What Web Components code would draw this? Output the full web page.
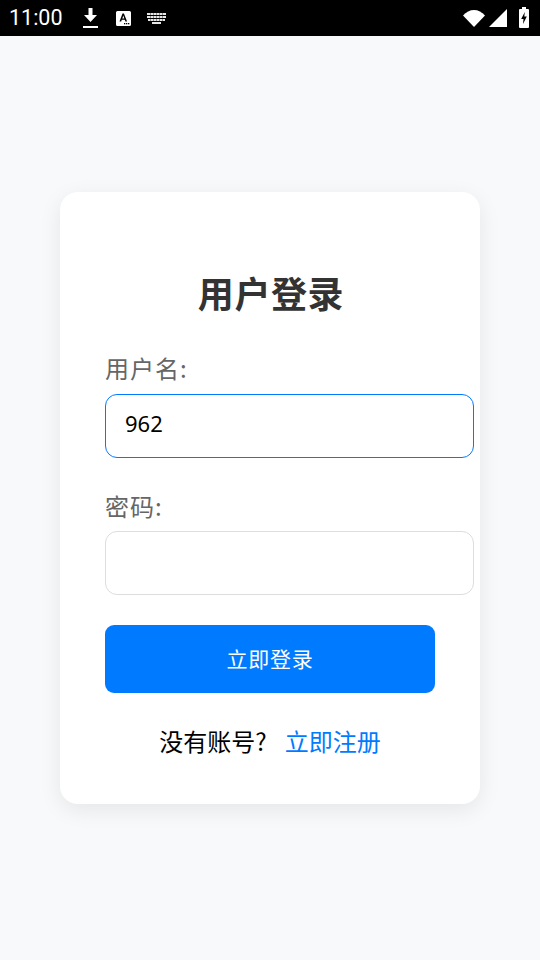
<!DOCTYPE html>
<html lang="zh">
<head>
<meta charset="utf-8">
<title>用户登录</title>
<style>
  html, body { margin: 0; height: 100%; }
  body {
    display: flex;
    flex-direction: column;
    height: 960px;
    overflow: hidden;
    background: #f8f9fa;
    font-family: "Noto Sans CJK SC", "Noto Sans", sans-serif;
  }
</style>
</head>
<body>
<status-bar time="11:00"></status-bar>
<login-page>
  <login-card>
    <span slot="title">用户登录</span>
    <text-field label="用户名:" value="962" focused></text-field>
    <text-field label="密码:"></text-field>
    <span slot="action">立即登录</span>
    <span slot="hint">没有账号?</span>
    <span slot="link">立即注册</span>
  </login-card>
</login-page>

<script>
class StatusBar extends HTMLElement {
  constructor() {
    super();
    this.attachShadow({ mode: "open" });
  }

  connectedCallback() {
    this.shadowRoot.innerHTML = /* html */ `
    <style>
      :host {
        display: flex;
        flex: none;
        align-items: center;
        height: 36px;
        padding: 0 11px 0 9px;
        background: #000;
        color: #fff;
        font: 400 21.5px/36px Roboto, sans-serif;
      }
      svg { display: block; flex: none; fill: #fff; }
      .time { width: 74px; }
      .download { margin-top: 1px; }
      .ime { margin-left: 18px; }
      .keys { margin-left: 16px; }
      .wifi { margin-left: auto; }
      .signal { margin-left: 4px; }
      .battery { margin-left: 12px; margin-top: -2px; }
    </style>
    <span class="time">${this.getAttribute("time")}</span>
    <svg class="download" width="15" height="21" viewBox="0 0 15 21">
      <path d="M5.500 0h4v7H14L7.500 14 1 7h4.500z"/><rect x="0" y="18" width="15" height="2"/>
    </svg>
    <svg class="ime" width="15" height="15" viewBox="0 0 15 15">
      <path fill-rule="evenodd" d="M1.500 0h12A1.500 1.500 0 0 1 15 1.500v12a1.500 1.500 0 0 1-1.500 1.500h-12A1.500 1.500 0 0 1 0 13.500v-12A1.500 1.500 0 0 1 1.500 0zM6.500 2.500 3.500 10.500h1.700l.6-1.700h3l.6 1.700h1.700L7.900 2.500zM6.300 7.400l1-3 1 3z"/>
      <rect x="8" y="12" width="1.300" height="1.300" fill="#000"/><rect x="10" y="12" width="1.300" height="1.300" fill="#000"/><rect x="12" y="12" width="1.300" height="1.300" fill="#000"/>
    </svg>
    <svg class="keys" width="19" height="11" viewBox="0 0 19 11">
      <path d="M0 0h19v2H0zM0 3h19v2H0zM1 6h17v2H1zM5 9h9v2H5z" opacity="0.9"/>
      <path fill="#000" opacity="0.55" d="M3 0h.7v8H3zM6 0h.7v8H6zM9 0h.7v8H9zM12 0h.7v8H12zM15 0h.7v8H15z"/>
    </svg>
    <svg class="wifi" width="22" height="17" viewBox="0 0 22 17">
      <path d="M0 5.500C3 2 7 0 11 0s8 2 11 5.500L11 17z"/>
    </svg>
    <svg class="signal" width="18" height="18" viewBox="0 0 18 18">
      <path d="M18 0v18H0z"/>
    </svg>
    <svg class="battery" width="10" height="21" viewBox="0 0 10 21">
      <path fill-rule="evenodd" d="M3 0h4v2h2a1 1 0 0 1 1 1v17a1 1 0 0 1-1 1H1a1 1 0 0 1-1-1V3a1 1 0 0 1 1-1h2zM5.800 5 2.200 12h2.300l-.5 5 3.800-7.500H5.300z"/>
    </svg>
    `;
  }
}

class LoginPage extends HTMLElement {
  constructor() {
    super();
    this.attachShadow({ mode: "open" });
    this.shadowRoot.innerHTML = /* html */ `
    <style>
      :host {
        display: flex;
        flex: 1;
        align-items: center;
        justify-content: center;
      }
    </style>
    <slot></slot>
    `;
  }
}

class TextField extends HTMLElement {
  constructor() {
    super();
    this.attachShadow({ mode: "open" });
  }

  connectedCallback() {
    const value = this.getAttribute("value") || "";
    this.shadowRoot.innerHTML = /* html */ `
    <style>
      :host { display: block; margin-bottom: 30px; }
      label {
        display: block;
        height: 36px;
        margin-bottom: 7px;
        color: #666;
        font-size: 24px;
        line-height: 36px;
        letter-spacing: 1px;
      }
      :host([focused]) label { margin-bottom: 8px; }
      .box {
        box-sizing: border-box;
        width: 369px;
        height: 64px;
        padding: 0 18px 0 19px;
        border: 1.500px solid #ddd;
        border-radius: 12px;
        background: #fff;
        color: #000;
        font: 400 22px/56px "Noto Sans", sans-serif;
      }
      :host([focused]) .box { border-color: #007bff; }
    </style>
    <label>${this.getAttribute("label")}</label>
    <div class="box" role="textbox">${value}</div>
    `;
  }
}

class LoginCard extends HTMLElement {
  constructor() {
    super();
    this.attachShadow({ mode: "open" });
    this.shadowRoot.innerHTML = /* html */ `
    <style>
      :host {
        display: block;
        box-sizing: border-box;
        width: 420px;
        height: 612px;
        padding: 73px 45px 0;
        border-radius: 18px;
        background: #fff;
        box-shadow: 0 6px 22px rgba(0, 0, 0, 0.08);
      }
      h1 {
        margin: 0 0 31px;
        padding-left: 2px;
        color: #333;
        font-size: 36px;
        font-weight: 700;
        line-height: 54px;
        letter-spacing: 0.6px;
        text-align: center;
      }
      button {
        display: block;
        width: 330px;
        height: 68px;
        padding: 0 0 2px;
        border: 0;
        border-radius: 9px;
        background: #007bff;
        color: #fff;
        font: 400 21px "Noto Sans CJK SC", sans-serif;
        letter-spacing: 0.75px;
      }
      p {
        display: flex;
        justify-content: center;
        gap: 18px;
        width: 330px;
        margin: 30px 0 0;
        color: #000;
        font-size: 24px;
        line-height: 36px;
      }
      a { color: #007bff; text-decoration: none; }
    </style>
    <h1><slot name="title"></slot></h1>
    <slot></slot>
    <button type="button"><slot name="action"></slot></button>
    <p><slot name="hint"></slot><a href="#"><slot name="link"></slot></a></p>
    `;
  }
}

customElements.define("status-bar", StatusBar);
customElements.define("login-page", LoginPage);
customElements.define("text-field", TextField);
customElements.define("login-card", LoginCard);
</script>
</body>
</html>
